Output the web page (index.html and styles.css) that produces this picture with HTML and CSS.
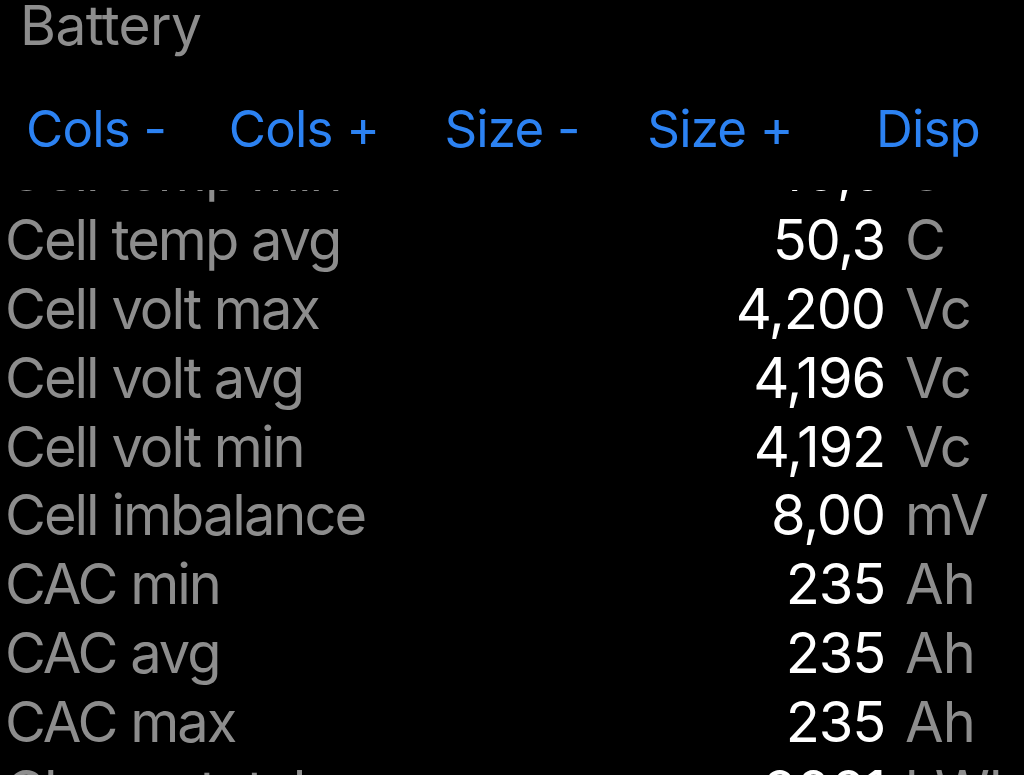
FILE: index.html
```html
<!DOCTYPE html>
<html>
<head>
<meta charset="utf-8">
<link rel="stylesheet" href="styles.css">
</head>
<body>
<div class="screen">
  <div class="title">Battery</div>
  <div class="toolbar">
    <span class="btn">Cols -</span>
    <span class="btn">Cols +</span>
    <span class="btn">Size -</span>
    <span class="btn">Size +</span>
    <span class="btn">Disp</span>
  </div>
  <div class="viewport">
    <div class="list">
      <div class="row"><span class="label">Cell temp min</span><span class="value">49,9</span><span class="unit">C</span></div>
      <div class="row"><span class="label">Cell temp avg</span><span class="value">50,3</span><span class="unit">C</span></div>
      <div class="row"><span class="label">Cell volt max</span><span class="value">4,200</span><span class="unit">Vc</span></div>
      <div class="row"><span class="label">Cell volt avg</span><span class="value">4,196</span><span class="unit">Vc</span></div>
      <div class="row"><span class="label">Cell volt min</span><span class="value">4,192</span><span class="unit">Vc</span></div>
      <div class="row"><span class="label">Cell imbalance</span><span class="value">8,00</span><span class="unit">mV</span></div>
      <div class="row"><span class="label">CAC min</span><span class="value">235</span><span class="unit">Ah</span></div>
      <div class="row"><span class="label">CAC avg</span><span class="value">235</span><span class="unit">Ah</span></div>
      <div class="row"><span class="label">CAC max</span><span class="value">235</span><span class="unit">Ah</span></div>
      <div class="row"><span class="label">Charge total</span><span class="value">2061</span><span class="unit">kWh</span></div>
    </div>
  </div>
</div>
</body>
</html>
```
FILE: styles.css
```css
html, body {
  margin: 0;
  padding: 0;
  background: #000;
}
body {
  font-family: Inter, "Noto Sans", sans-serif;
  width: 1024px;
  height: 775px;
  overflow: hidden;
}
.screen {
  display: flex;
  flex-direction: column;
  height: 775px;
}
.title {
  color: #8d8d8d;
  font-size: 55px;
  line-height: 50px;
  padding-left: 20px;
  height: 60px;
  letter-spacing: -0.6px;
}
.toolbar {
  display: grid;
  grid-template-columns: repeat(5, 208px);
  margin: 0 -8px;
  height: 130px;
  align-items: center;
  padding-top: 6px;
  box-sizing: border-box;
}
.btn {
  color: #2c82f2;
  font-size: 51px;
  text-align: center;
  letter-spacing: -0.8px;
}
.viewport {
  flex: 1;
  overflow: hidden;
}
.list {
  margin-top: -53px;
}
.row {
  display: grid;
  grid-template-columns: 1fr auto 119px;
  column-gap: 20px;
  height: 68.8px;
  align-items: center;
  font-size: 56px;
  letter-spacing: -2px;
  padding-left: 5px;
}
.label {
  color: #8d8d8d;
}
.value {
  color: #fff;
  text-align: right;
  letter-spacing: -1.2px;
}
.unit {
  color: #8d8d8d;
  letter-spacing: -1px;
}
```
